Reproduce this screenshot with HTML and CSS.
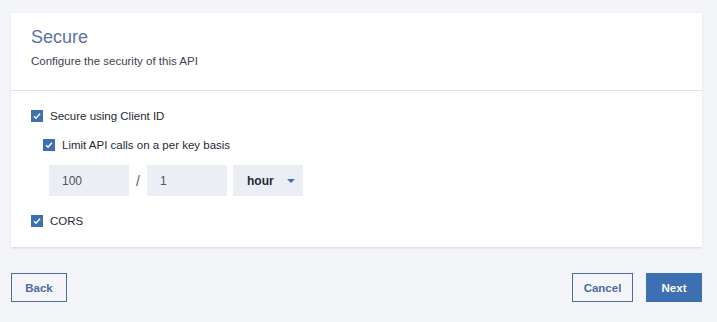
FILE: index.html
```html
<!DOCTYPE html>
<html lang="en">
<head>
    <meta charset="UTF-8">
    <title>Secure</title>
    <link rel="stylesheet" href="styles.css">
</head>
<body>

    <div class="card">
        <div class="card-header">
            <h1 class="title">Secure</h1>
            <p class="subtitle">Configure the security of this API</p>
        </div>
        <div class="card-body">
            <label class="check">
                <span class="box"><svg viewBox="0 0 12 12" width="12" height="12"><path d="M3 6.2l2 2 4-4.4" fill="none" stroke="#fff" stroke-width="1.6"/></svg></span>
                Secure using Client ID
            </label>
            <label class="check nested">
                <span class="box"><svg viewBox="0 0 12 12" width="12" height="12"><path d="M3 6.2l2 2 4-4.4" fill="none" stroke="#fff" stroke-width="1.6"/></svg></span>
                Limit API calls on a per key basis
            </label>
            <div class="rate">
                <div class="field">100</div>
                <span class="slash">/</span>
                <div class="field">1</div>
                <div class="select">
                    hour
                    <svg viewBox="0 0 8 4" width="8" height="4"><path d="M0 0h8L4 4z" fill="#3d70b2"/></svg>
                </div>
            </div>
            <label class="check cors">
                <span class="box"><svg viewBox="0 0 12 12" width="12" height="12"><path d="M3 6.2l2 2 4-4.4" fill="none" stroke="#fff" stroke-width="1.6"/></svg></span>
                CORS
            </label>
        </div>
    </div>

    <div class="actions">
        <button class="btn secondary back">Back</button>
        <div class="right">
            <button class="btn secondary cancel">Cancel</button>
            <button class="btn primary">Next</button>
        </div>
    </div>

</body>
</html>
```

FILE: styles.css
```css
/* General */
body {
    margin: 0;
    padding: 13px 15px 0 11px;
    background: #f4f5f8;
    font-family: 'Liberation Sans', Arial, sans-serif;
    color: #152935;
}

/* Card */
.card {
    width: 691px;
    background: #fff;
    box-shadow: 0 1px 2px rgba(0, 0, 0, 0.12);
}

.card-header {
    padding: 12px 20px 20px;
    border-bottom: 1px solid #dfe3e6;
}

.title {
    margin: 0;
    font-size: 18px;
    font-weight: normal;
    line-height: 24px;
    color: #5e72a3;
}

.subtitle {
    margin: 3px 0 0;
    font-size: 11.5px;
    line-height: 18px;
    color: #3d4450;
}

.card-body {
    padding: 16px 20px 17px;
}

/* Checkboxes */
.check {
    display: flex;
    align-items: center;
    gap: 7px;
    height: 18px;
    font-size: 11.5px;
    color: #1f2a36;
}

.check.nested {
    margin: 11px 0 0 12px;
}

.check.cors {
    margin-top: 16px;
}

.box {
    display: flex;
    width: 12px;
    height: 12px;
    background: #3d70b2;
}

/* Rate limit row */
.rate {
    display: flex;
    align-items: center;
    margin: 11px 0 0 18px;
}

.field, .select {
    display: flex;
    align-items: center;
    height: 31px;
    background: #ebeef4;
    font-size: 12px;
    box-sizing: border-box;
}

.field {
    width: 80px;
    padding-left: 13px;
    color: #4a5360;
}

.slash {
    width: 18px;
    text-align: center;
    font-size: 14px;
    color: #5a6370;
}

.select {
    width: 70px;
    margin-left: 6px;
    padding-left: 14px;
    font-weight: bold;
    color: #1f2a36;
    gap: 13px;
}

/* Footer buttons */
.actions {
    display: flex;
    justify-content: space-between;
    width: 691px;
    margin-top: 26px;
}

.right {
    display: flex;
    gap: 13px;
}

.btn {
    height: 29px;
    font-family: inherit;
    font-size: 11.5px;
    font-weight: bold;
    padding: 0;
    cursor: pointer;
}

.secondary {
    background: transparent;
    border: 1px solid #5069a0;
    color: #5069a0;
}

.back {
    width: 56px;
}

.cancel {
    width: 61px;
}

.primary {
    width: 56px;
    background: #3d6fb3;
    border: 1px solid #3d6fb3;
    color: #fff;
}
```
